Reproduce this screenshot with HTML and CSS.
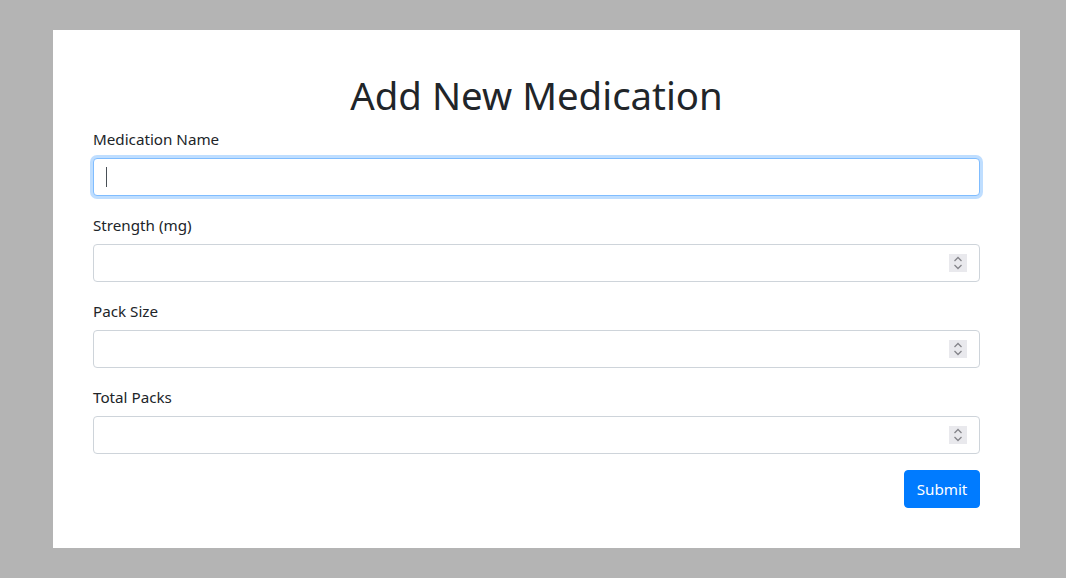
FILE: index.html
```html
<!DOCTYPE html>
<html lang="en">
<head>
<meta charset="utf-8">
<title>Add New Medication</title>
<link rel="stylesheet" href="styles.css">
</head>
<body>
<div class="page">
  <div class="card">
    <h1 class="title">Add New Medication</h1>
    <form class="form">
      <div class="group">
        <label class="label" for="name">Medication Name</label>
        <div class="field">
          <input class="control focused" id="name" type="text">
          <span class="caret"></span>
        </div>
      </div>
      <div class="group">
        <label class="label" for="strength">Strength (mg)</label>
        <div class="field">
          <input class="control" id="strength" type="number">
          <span class="spin"><svg width="18" height="18" viewBox="0 0 18 18"><path d="M5.5 7 L9 3.5 L12.5 7" fill="none" stroke="#85858a" stroke-width="1.3"/><path d="M5.5 11 L9 14.5 L12.5 11" fill="none" stroke="#85858a" stroke-width="1.3"/></svg></span>
        </div>
      </div>
      <div class="group">
        <label class="label" for="pack">Pack Size</label>
        <div class="field">
          <input class="control" id="pack" type="number">
          <span class="spin"><svg width="18" height="18" viewBox="0 0 18 18"><path d="M5.5 7 L9 3.5 L12.5 7" fill="none" stroke="#85858a" stroke-width="1.3"/><path d="M5.5 11 L9 14.5 L12.5 11" fill="none" stroke="#85858a" stroke-width="1.3"/></svg></span>
        </div>
      </div>
      <div class="group">
        <label class="label" for="total">Total Packs</label>
        <div class="field">
          <input class="control" id="total" type="number">
          <span class="spin"><svg width="18" height="18" viewBox="0 0 18 18"><path d="M5.5 7 L9 3.5 L12.5 7" fill="none" stroke="#85858a" stroke-width="1.3"/><path d="M5.5 11 L9 14.5 L12.5 11" fill="none" stroke="#85858a" stroke-width="1.3"/></svg></span>
        </div>
      </div>
      <div class="actions">
        <button class="btn" type="button">Submit</button>
      </div>
    </form>
  </div>
</div>
</body>
</html>
```
FILE: styles.css
```css
* { box-sizing: border-box; }
html, body { margin: 0; padding: 0; }
body {
  background: #b4b4b4;
  font-family: "Noto Sans", "Open Sans", sans-serif;
  color: #212529;
  font-size: 15.2px;
  line-height: 24px;
}
.page {
  padding: 30px 46px 30px 53px;
}
.card {
  background: #fff;
  width: 967px;
  padding: 41px 40px 40px 40px;
}
.title {
  margin: 0 0 7px 0;
  font-size: 38.4px;
  font-weight: 400;
  line-height: 48px;
  text-align: center;
}
.form { margin: 0; }
.group { margin-bottom: 16px; }
.label {
  display: block;
  padding-top: 1px;
  margin-bottom: 7px;
  font-size: 15.2px;
  line-height: 24px;
}
.field { position: relative; }
.control {
  display: block;
  width: 100%;
  height: 38px;
  padding: 6px 12px;
  font: inherit;
  color: #495057;
  background: #fff;
  border: 1px solid #ced4da;
  border-radius: 4px;
  outline: none;
  -moz-appearance: textfield;
}
.control::-webkit-inner-spin-button,
.control::-webkit-outer-spin-button {
  -webkit-appearance: none;
  margin: 0;
}
.control.focused {
  border-color: #80bdff;
  box-shadow: 0 0 0 3px rgba(0, 123, 255, 0.25);
}
.caret {
  position: absolute;
  left: 13px;
  top: 9px;
  width: 1px;
  height: 20px;
  background: #495057;
}
.spin {
  position: absolute;
  right: 13px;
  top: 10px;
  width: 18px;
  height: 18px;
  background: #e9e9ed;
  display: flex;
}
.actions {
  display: flex;
  justify-content: flex-end;
}
.btn {
  font: inherit;
  color: #fff;
  background: #007bff;
  border: 1px solid #007bff;
  border-radius: 4px;
  height: 38px;
  width: 76px;
  padding: 0;
  line-height: 24px;
}
```
